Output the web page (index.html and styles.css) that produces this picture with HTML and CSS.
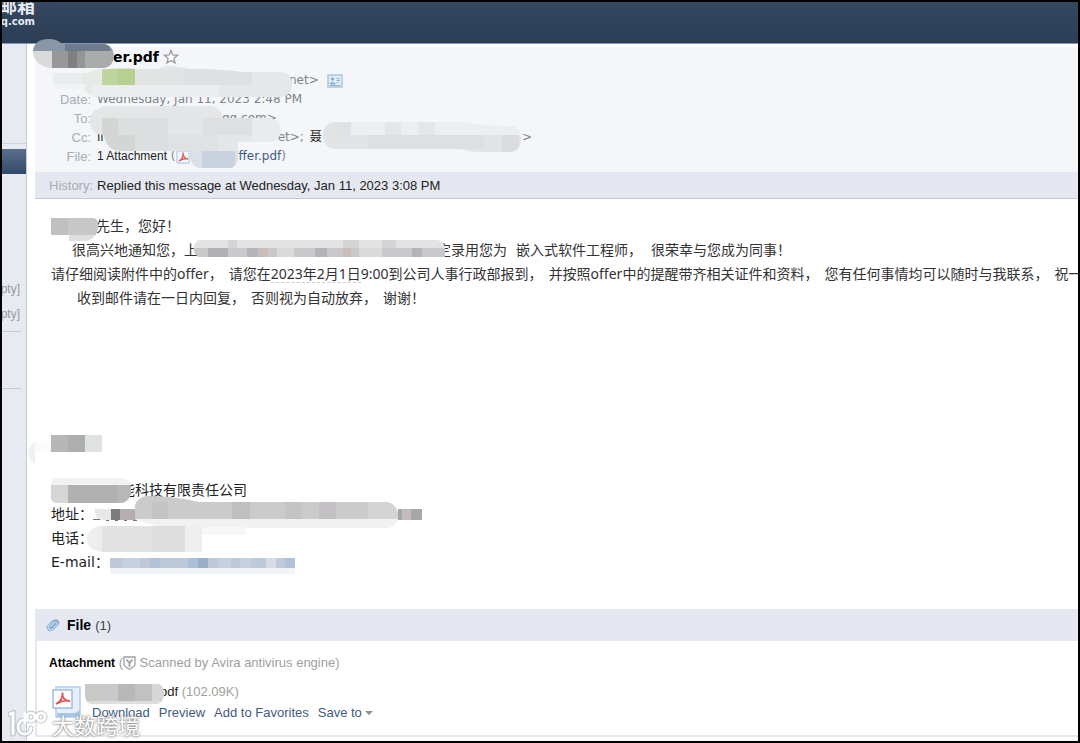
FILE: index.html
```html
<!DOCTYPE html>
<html lang="en">
<head>
    <meta charset="UTF-8">
    <meta name="viewport" content="width=device-width, initial-scale=1.0">
    <title>Mail</title>
    <link rel="stylesheet" href="styles.css">
</head>
<body>

    <div class="window">
        <header class="topbar">
            <div class="logo">
                <span class="logo-name">邮箱</span>
                <span class="logo-url">q.com</span>
            </div>
        </header>

        <div class="content">
            <nav class="sidebar">
                <div class="side-top"></div>
                <div class="side-active"></div>
                <div class="side-folders">
                    <a href="#">[Empty]</a>
                    <a href="#">[Empty]</a>
                </div>
                <div class="side-block"></div>
            </nav>

            <main class="mail">
                <section class="mail-head">
                    <h1 class="subject">er.pdf
                        <svg class="star" viewBox="0 0 16 16"><path d="M8 1.6l1.8 4.3 4.7.4-3.6 3 1.1 4.6L8 11.5l-4 2.4 1.1-4.6-3.6-3 4.7-.4z"/></svg>
                    </h1>
                    <dl class="info">
                        <dt>From:</dt>
                        <dd class="from"><span>net&gt;</span>
                            <svg class="card" viewBox="0 0 16 14"><rect x="1" y="1" width="14" height="12" fill="#e3eef7" stroke="#a9c6df" stroke-width="1.5"/><circle cx="5.5" cy="5" r="1.8" fill="#8db1d2"/><path d="M2.8 10.500V9.300c0-1.400 5.400-1.400 5.400 0v1.200z" fill="#8db1d2"/><path d="M9.500 4.500h3.500M9.500 6.500h3.500M9.500 8.500h2M3 11.500h10" stroke="#8db1d2"/></svg>
                        </dd>
                        <dt>Date:</dt>
                        <dd>Wednesday, Jan 11, 2023 2:48 PM</dd>
                        <dt>To:</dt>
                        <dd class="to">qq.com&gt;</dd>
                        <dt>Cc:</dt>
                        <dd class="cc"><b>li</b><span class="cc-first">et&gt;;</span><b>聂</b><span class="cc-end">&gt;</span></dd>
                        <dt>File:</dt>
                        <dd class="file"><span class="count">1 Attachment</span> (<svg class="pdf-small" viewBox="0 0 14 14"><path d="M1 1h12v12H1z" fill="#f5f9fe" stroke="#a7c0e0"/><path d="M3 11c3-1.500 4.500-5 4-8.500 0 4 2 6 5 6.500-3-.5-6 0-9 2z" fill="none" stroke="#e0605c" stroke-width="1.400"/></svg><a href="#">ffer.pdf</a>)</dd>
                    </dl>
                </section>
                <p class="history"><span>History:</span>Replied this message at Wednesday, Jan 11, 2023 3:08 PM</p>

                <article class="letter">
                    <p class="greeting">先生，您好！</p>
                    <p class="indent"><span class="notice">很高兴地通知您，上</span><span>定录用您为</span><span>嵌入式软件工程师，</span><span>很荣幸与您成为同事！</span></p>
                    <p><span>请仔细阅读附件中的offer，</span><span>请您在<u>2023年2月1日</u>9:00到公司人事行政部报到，</span><span>并按照offer中的提醒带齐相关证件和资料，</span><span>您有任何事情均可以随时与我联系，</span><span>祝一切顺利</span></p>
                    <p class="indent-more"><span>收到邮件请在一日内回复，</span><span>否则视为自动放弃，</span><span>谢谢！</span></p>
                    <address class="signature">
                        <p class="company">能科技有限责任公司</p>
                        <p>地址：</p>
                        <p>电话：</p>
                        <p class="email">E-mail：</p>
                    </address>
                </article>

                <section class="files">
                    <h2>
                        <svg class="clip" viewBox="0 0 16 16"><g fill="none" stroke-linecap="round" transform="rotate(43 8 8)"><path d="M5.500 5v6a2.500 2.500 0 0 0 5 0V4a2 2 0 0 0-4-1M8 5v5" stroke="#7ba5cf" stroke-width="3"/><path d="M5.500 5v6a2.500 2.500 0 0 0 5 0V4a1.500 1.500 0 0 0-3 0v6" stroke="#c9dff2" stroke-width="1.200"/></g></svg>
                        File <span>(1)</span>
                    </h2>
                    <div class="files-body">
                        <p class="scan"><strong>Attachment</strong> (<svg class="shield" viewBox="0 0 13 14"><path d="M1 1h11v7c0 2.500-3 4-5.500 5.300C4 12 1 10.500 1 8z" fill="none" stroke="#a0a0a0" stroke-width="1.300"/><path d="M3.500 3.500l3 3.500 3-3.500M6.500 7v4" fill="none" stroke="#a0a0a0" stroke-width="1.800"/></svg> Scanned by Avira antivirus engine)</p>
                        <div class="attachment">
                            <svg class="pdf" viewBox="0 0 30 32"><path d="M4 1h24v27l-3 3H4z" fill="#e6effa" stroke="#b4cbe8" stroke-width="1.500"/><path d="M28 24v7H5v-4h18z" fill="#a9c5e8"/><rect x="1" y="4" width="19" height="18" fill="#fdfdff" stroke="#a2bce0" stroke-width="1.500"/><path d="M4 18c4-2 7-6 6.500-11.500C10 12 13 15 18 15c-5-1-9 0-14 3z" fill="none" stroke="#de5450" stroke-width="1.800"/></svg>
                            <div>
                                <p class="filename">pdf <span>(102.09K)</span></p>
                                <p class="actions"><a href="#">Download</a><a href="#">Preview</a><a href="#">Add to Favorites</a><a href="#">Save to<i class="caret"></i></a></p>
                            </div>
                        </div>
                    </div>
                </section>
            </main>
        </div>

        <!-- mosaic over private data -->
        <svg class="mosaic" width="1080" height="743" viewBox="0 0 1080 743">
            <defs>
                <clipPath id="m-title"><path d="M33 52c0-9 7-13 15-13 6 0 10 1 14 5h41c6 0 11 5 11 12s-5 12-11 12H53c-12 0-20-8-20-16z"/></clipPath>
                <clipPath id="m-from"><path d="M53 73h35c8-6 35-4 70-4 10-6 22-2 32 0 18 0 40 1 50 3h40c8 0 12 5 12 12s-4 13-12 13H100c-10 0-16-5-18-13H53z"/></clipPath>
                <clipPath id="m-to"><path d="M102 106h108c8 0 11 6 13 12h44c8 0 14 5 14 12s-5 12-12 12h-31v14c0 6-3 12-9 12h-27c-8 0-12-5-13-17H122c-10 0-16-4-18-16-8 0-14-4-14-14 0-8 6-13 12-13z"/></clipPath>
                <clipPath id="m-cc"><path d="M335 122h125c10 1 20 4 50 4 7 0 11 5 11 13s-5 13-11 13h-33c-6 0-14-3-20-3H335c-7 0-12-6-12-14s5-13 12-13z"/></clipPath>
                <clipPath id="m-name"><path d="M51 218h41c5 0 6 4 6 8 0 8-5 15-14 15H69v-6H51z"/></clipPath>
                <clipPath id="m-notice"><path d="M199 240h237c6 0 9 5 9 9v8H198c-5-4-7-13 1-17z"/></clipPath>
                <clipPath id="m-company"><path d="M58 478h64c6 0 9 5 9 12s-4 13-11 13H58c-5 0-7-2-7-6v-12c0-5 2-7 7-7z"/></clipPath>
                <clipPath id="m-address"><path d="M148 496c-8 0-13 6-13 11v12c12 4 24 10 50 9h201c8 0 12-6 12-12 0-8-5-14-14-14H200c-15-3-30-6-52-6z"/></clipPath>
                <clipPath id="m-file"><path d="M85 684h71c6 0 8 5 8 10s-3 10-9 10H93c-6 0-8-4-8-10z"/></clipPath>
            </defs>
            <g clip-path="url(#m-title)">
                <path d="M33 38h90v13H33z" fill="#8996a5"/><path d="M33 51h19v18H33z" fill="#d9dadc"/>
                <path d="M52 51h17v18H52z" fill="#989898"/><path d="M68 51h9v18h-9z" fill="#808080"/><path d="M77 51h8v18h-8z" fill="#949596"/><path d="M85 51h30v18H85z" fill="#aaabab"/>
                <path d="M65 44h45v7H65z" fill="#6e7b8b"/>
            </g>
            <g clip-path="url(#m-from)">
                <path d="M50 66h250v32H50z" fill="#e5e7e9"/><path d="M50 66h32v18H50z" fill="#e9edf2"/>
                <path d="M82 66h20v32H82z" fill="#e7eae5"/><path d="M102 68h33v17h-33z" fill="#bed5a0"/><path d="M118 68h17v17h-17z" fill="#b6d092"/>
                <path d="M135 69h34v16h-34z" fill="#e2e5e3"/><path d="M169 68h16v17h-16z" fill="#e1e3e5"/><path d="M185 68h67v17h-67z" fill="#dee0e1"/>
                <path d="M92 85h160v13H92z" fill="#ebedee"/><path d="M218 85h34v13h-34z" fill="#e5e7e9"/>
            </g>
            <path d="M53 84h32v5H53z" fill="#f1f3f6"/>
            <g clip-path="url(#m-to)">
                <path d="M85 104h200v65H85z" fill="#e4e6e7"/><path d="M102 118h16v37h-16z" fill="#d4d6d6"/><path d="M118 118h50v17h-50z" fill="#dcdedf"/>
                <path d="M135 135h33v20h-33z" fill="#dcdfdf"/><path d="M118 135h17v20h-17z" fill="#d2d7d5"/><path d="M168 135h50v17h-50z" fill="#dfe1e3"/>
                <path d="M202 118h50v17h-50z" fill="#dedfe1"/><path d="M252 118h30v25h-30z" fill="#e9ebed"/><path d="M190 151h50v19h-50z" fill="#d9e0e7"/><path d="M202 151h33v19h-33z" fill="#c9d3df"/>
            </g>
            <g clip-path="url(#m-cc)">
                <path d="M320 120h205v35H320z" fill="#e2e4e6"/><path d="M351 120h170v15H351z" fill="#eceef0"/><path d="M385 120h16v15h-16zM418 120h17v15h-17z" fill="#e5e6e9"/>
                <path d="M335 120h16v15h-16z" fill="#dfe1e2"/><path d="M368 135h116v14H368z" fill="#dddfe0"/><path d="M502 135h17v17h-17z" fill="#dadcde"/>
            </g>
            <g clip-path="url(#m-name)"><path d="M51 218h50v17H51z" fill="#c0c0c0"/><path d="M68 218h17v17H68zM85 218h14v17H85z" fill="#c7c7c7"/><path d="M68 235h30v8H68z" fill="#dedede"/></g>
            <g clip-path="url(#m-notice)">
                <path d="M190 239h258v9H190z" fill="#e3e3e3"/><path d="M190 248h258v10H190z" fill="#c9c9cb"/>
                <path d="M208 248h20v10h-20z" fill="#b0b0b5"/><path d="M247 248h11v10h-11zM315 248h12v10h-12zM412 248h10v10h-10z" fill="#b3b3ba"/><path d="M258 248h10v10h-10zM343 248h8v10h-8z" fill="#c9bdb8"/><path d="M277 248h17v10h-17zM359 248h23v10h-23z" fill="#dadadb"/><path d="M228 239h9v9h-9zM343 239h16v9h-16zM382 239h14v9h-14z" fill="#d5d5d6"/>
            </g>
            <path d="M51 435h17v17H51z" fill="#b7b7b7"/><path d="M68 435h17v17H68z" fill="#adaeae"/><path d="M85 435h17v17H85z" fill="#e0e2e1"/>
            <path d="M35 442c-9 4-9 18 0 22z" fill="#f1f2f4"/><path d="M35 441h16v11H35z" fill="#fbfbfb"/>
            <g clip-path="url(#m-company)"><path d="M51 478h82v7H51z" fill="#f2f2f2"/><path d="M51 485h18v20H51z" fill="#d6d6d6"/><path d="M68 485h64v20H68z" fill="#b1b1b1"/><path d="M118 485h14v20h-14z" fill="#b7b8b9"/></g>
            <path d="M94 509h17v11H98z" fill="#e8e8e8"/><path d="M111 509h9v11h-9z" fill="#7c7c7c"/><path d="M120 509h16v11h-16z" fill="#b4afae"/><path d="M93 519h7v1h-7zM106 520h3v1h-3zM115 520h3v1h-3zM124 520h3v1h-3zM133 520h4v1h-4z" fill="#777"/>
            <path d="M398 509h4v11h-4z" fill="#a5a5a5"/><path d="M402 509h9v11h-9z" fill="#c3bcbb"/><path d="M411 509h11v11h-11z" fill="#a7a7a9"/>
            <g clip-path="url(#m-address)">
                <path d="M135 495h264v24H135z" fill="#cbcbcb"/><path d="M152 502h16v17h-16zM285 502h17v17h-17z" fill="#c4c4c4"/><path d="M232 502h18v17h-18z" fill="#c0bfbf"/><path d="M319 502h17v17h-17z" fill="#c4c1c4"/><path d="M368 502h31v17h-31z" fill="#d4d4d4"/><path d="M135 519h264v10H135z" fill="#f1f1f1"/>
            </g>
            <path d="M101 526h101v26h-99c-10 0-16-6-16-13s6-13 14-13z" fill="#eee"/><path d="M102 526h50v26h-50z" fill="#e2e2e2"/><path d="M152 526h33v26h-33z" fill="#ddd"/><path d="M202 527h44v8h-44z" fill="#f7f7f7"/>
            <path d="M110 558h185v10H110z" fill="#becada"/><path d="M123 558h17v10h-17zM218 558h13v10h-13zM240 558h11v10h-11z" fill="#c7d0de"/><path d="M150 558h10v10h-10zM285 558h10v10h-10z" fill="#b2c2d7"/><path d="M188 558h10v10h-10z" fill="#aec0d5"/><path d="M198 558h10v10h-10z" fill="#9aafc8"/><path d="M266 558h10v10h-10z" fill="#d8dce3"/><path d="M110 568h185v6H110z" fill="#f1f4f8"/>
            <g clip-path="url(#m-file)"><path d="M85 684h80v21H85z" fill="#c9c9c9"/><path d="M118 684h17v17h-17z" fill="#b8b8b8"/><path d="M135 684h17v17h-17z" fill="#c1c1c1"/><path d="M152 684h13v21h-13z" fill="#d7d7d7"/><path d="M85 701h80v4H85z" fill="#dedede"/></g>
        </svg>

        <div class="watermark">
            <svg viewBox="0 0 40 28"><g fill="none" stroke-linecap="round"><g stroke="#9a9fa6" stroke-opacity=".6" stroke-width="5"><path d="M2 4l3-1v21M19 10c-11-3-12 15-2 14 4 0 6-3 6-6"/><circle cx="23" cy="7" r="4"/><circle cx="33" cy="7" r="4"/></g><g stroke="#fff" stroke-width="3"><path d="M2 4l3-1v21M19 10c-11-3-12 15-2 14 4 0 6-3 6-6M17 3v9"/><circle cx="23" cy="7" r="4"/><circle cx="33" cy="7" r="4"/></g></g></svg>
            <span>大数跨境</span>
        </div>
    </div>

</body>
</html>
```
FILE: styles.css
```css
* {
    box-sizing: border-box;
}

body {
    margin: 0;
    font-family: "Liberation Sans", "Noto Sans CJK SC", sans-serif;
    font-size: 13px;
    color: #222;
    background-color: #fff;
}

h1, h2, p, dl, dd {
    margin: 0;
}

a {
    color: #3e5a82;
    text-decoration: none;
}

.window {
    position: relative;
    display: flex;
    flex-direction: column;
    min-height: 100vh;
    border: 2px solid #000;
    overflow: hidden;
}

.topbar {
    height: 42px;
    background: linear-gradient(#33475f, #2c3e56);
    border-bottom: 1px solid #8594bd;
}

.logo {
    display: flex;
    flex-direction: column;
    align-items: flex-end;
    justify-content: flex-end;
    width: 33px;
    height: 26px;
    overflow: hidden;
    color: #e8ecf2;
    font-weight: bold;
    white-space: nowrap;
}

.logo-name {
    font-size: 18px;
    line-height: 18px;
}

.logo-url {
    font-family: "DejaVu Sans", sans-serif;
    font-size: 10px;
    line-height: 12px;
}

.content {
    display: flex;
    flex: 1;
}

.sidebar {
    flex: none;
    width: 25px;
    background-color: #e7eaf0;
    border-right: 1px solid #c3ccd5;
}

.side-top {
    height: 100px;
    margin-bottom: 5px;
    border-bottom: 1px solid #cfd5dd;
}

.side-active {
    height: 25px;
    background: linear-gradient(#5a6f8b, #33496a);
}

.side-folders {
    height: 158px;
    margin-right: 5px;
    padding: 103px 1px 0 0;
    border-bottom: 1px solid #c5cad2;
}

.side-folders a {
    display: flex;
    justify-content: flex-end;
    overflow: hidden;
    color: #999;
    font-size: 12px;
    line-height: 25px;
}

.side-block {
    height: 57px;
    margin-right: 5px;
    border-bottom: 1px solid #c5cad2;
}

.mail {
    flex: 1;
    min-width: 0;
    padding: 3px 0 0 8px;
}

.mail-head {
    padding-bottom: 6px;
    background-color: #f4f6f9;
}

.subject {
    display: flex;
    align-items: center;
    gap: 4px;
    height: 24px;
    padding: 0 0 4px 78px;
    font-family: "DejaVu Sans", sans-serif;
    font-size: 14px;
    color: #000;
}

.star {
    width: 16px;
    height: 16px;
    fill: #fff;
    stroke: #999;
    stroke-width: 1.3;
}

.info {
    display: grid;
    grid-template-columns: 56px 1fr;
    column-gap: 6px;
    line-height: 19px;
}

.info dt {
    color: #a6adb5;
    text-align: right;
}

.info dd {
    display: flex;
    align-items: center;
    font-family: "DejaVu Sans", "Noto Sans CJK SC", sans-serif;
    font-size: 12px;
    color: #7f858c;
    white-space: pre;
}

.info .from {
    gap: 8px;
    padding-left: 192px;
}

.card {
    width: 16px;
    height: 14px;
}

.info .to {
    padding-left: 125px;
}

.info b {
    color: #222;
    font-weight: normal;
}

.cc-first {
    padding: 0 6px 0 174px;
}

.cc-end {
    padding-left: 200px;
}

.count {
    font-family: "Liberation Sans", sans-serif;
    color: #222;
}

.pdf-small {
    width: 14px;
    height: 14px;
    margin-right: 49px;
}

.history {
    height: 27px;
    padding-left: 14px;
    background-color: #e5e8f0;
    border-bottom: 1px solid #c3c7d0;
    line-height: 27px;
}

.history span {
    margin-right: 4px;
    color: #a6adb5;
}

.letter {
    height: 410px;
    padding: 15px 0 0 16px;
    overflow: hidden;
    font-family: "Noto Sans", "Noto Sans CJK SC", sans-serif;
    font-size: 14px;
    line-height: 24px;
    white-space: nowrap;
    color: #333;
}

.letter p {
    display: flex;
    gap: 6px;
    height: 24px;
}

.letter u {
    display: inline-block;
    height: 21px;
    border-bottom: 1px dashed #ccc;
    text-decoration: none;
    vertical-align: top;
}

.letter .greeting {
    padding-left: 45px;
}

.letter .indent {
    gap: 9px;
    padding-left: 21px;
}

.letter .indent-more {
    padding-left: 26px;
}

.notice {
    width: 356px;
}

.signature {
    padding-top: 168px;
    font-style: normal;
    color: #222;
}

.letter .company {
    padding-left: 70px;
}

.email {
    font-family: "DejaVu Sans", "Noto Sans CJK SC", sans-serif;
}

.files {
    border-bottom: 2px solid #e5e8f0;
}

.files h2 {
    display: flex;
    align-items: center;
    gap: 4px;
    height: 32px;
    padding-left: 10px;
    background-color: #e5e8f0;
    font-size: 14px;
    color: #000;
}

.files h2 span {
    font-size: 13px;
    font-weight: normal;
    color: #444;
}

.clip {
    width: 15px;
    height: 15px;
    margin-right: 3px;
}

.files-body {
    padding: 12px 0 12px 12px;
    border-left: 2px solid #e5e8f0;
}

.scan {
    line-height: 20px;
    color: #a0a0a0;
}

.scan strong {
    font-size: 12px;
    color: #000;
}

.shield {
    width: 13px;
    height: 14px;
    vertical-align: -3px;
}

.attachment {
    display: flex;
    gap: 10px;
    padding: 8px 0 0 3px;
    line-height: 21px;
}

.pdf {
    width: 30px;
    height: 32px;
    margin-top: 5px;
}

.filename {
    padding-left: 68px;
}

.filename span {
    color: #a0a0a0;
}

.actions {
    display: flex;
    gap: 9px;
}

.caret {
    display: inline-block;
    margin-left: 3px;
    border: 4px solid transparent;
    border-top-color: #8a929c;
    border-bottom: 0;
    vertical-align: 2px;
}

.mosaic {
    position: absolute;
    top: -2px;
    left: -2px;
    pointer-events: none;
}

.watermark {
    position: absolute;
    left: 6px;
    bottom: 3px;
    display: flex;
    align-items: center;
    gap: 4px;
    color: #fff;
    font-family: "Noto Sans CJK SC", sans-serif;
    font-size: 22px;
    line-height: 28px;
    text-shadow: 0 0 2px #777, 0 0 3px #999;
}

.watermark svg {
    width: 40px;
    height: 28px;
}
```
